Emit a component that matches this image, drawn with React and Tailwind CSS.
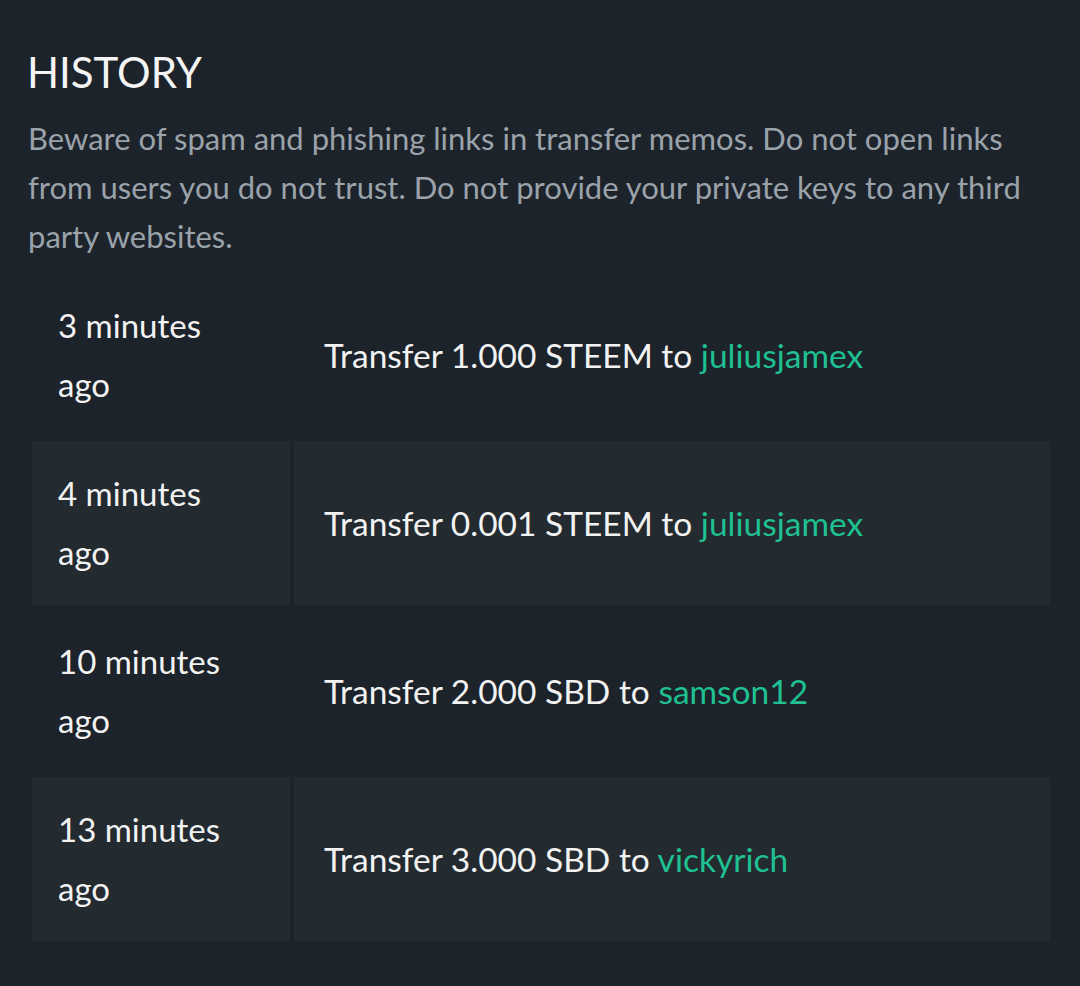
import React from 'react';

const rows = [
    { time: '3 minutes ago', text: 'Transfer 1.000 STEEM to ', user: 'juliusjamex' },
    { time: '4 minutes ago', text: 'Transfer 0.001 STEEM to ', user: 'juliusjamex' },
    { time: '10 minutes ago', text: 'Transfer 2.000 SBD to ', user: 'samson12' },
    { time: '13 minutes ago', text: 'Transfer 3.000 SBD to ', user: 'vickyrich' },
    { time: '27 minutes ago', text: 'Claim rewards: 0.110 SBD and 1.000 STEEM', user: '' },
];

const HistoryRow = ({ row, striped }) => {
    const bg = striped ? 'bg-[#232a30]' : '';
    return (
        <tr>
            <td className={`${bg} w-[258px] h-[164px] pl-[26px] pr-[40px] align-middle text-[33px] leading-[59px] text-[#f2f2f2]`}>
                {row.time}
            </td>
            <td className={`${bg} pl-[30px] pr-4 align-middle text-[33.5px] leading-[59px] text-[#f2f2f2]`}>
                {row.text}
                {row.user && <a className="text-[#1fc091]">{row.user}</a>}
            </td>
        </tr>
    );
};

const App = () => {
    return (
        <div className="h-[986px] overflow-hidden bg-[#1d232a] pl-[28px] pr-[26px] pt-[44px] font-['Lato','Liberation_Sans',sans-serif]">
            <h2 className="-ml-[1px] text-[42px] leading-[56px] text-[#f4f4f4] font-normal">HISTORY</h2>
            <p className="mt-[14px] text-[31px] leading-[49px] text-[#9aa2aa]">
                Beware of spam and phishing links in transfer memos. Do not open links from users you do not trust. Do not provide your private keys to any third party websites.
            </p>
            <table className="mt-[8px] w-[1026px] border-separate border-spacing-[4px]">
                <tbody>
                    {rows.map((row, i) => (
                        <HistoryRow key={i} row={row} striped={i % 2 === 1} />
                    ))}
                </tbody>
            </table>
        </div>
    );
};

export default App;
